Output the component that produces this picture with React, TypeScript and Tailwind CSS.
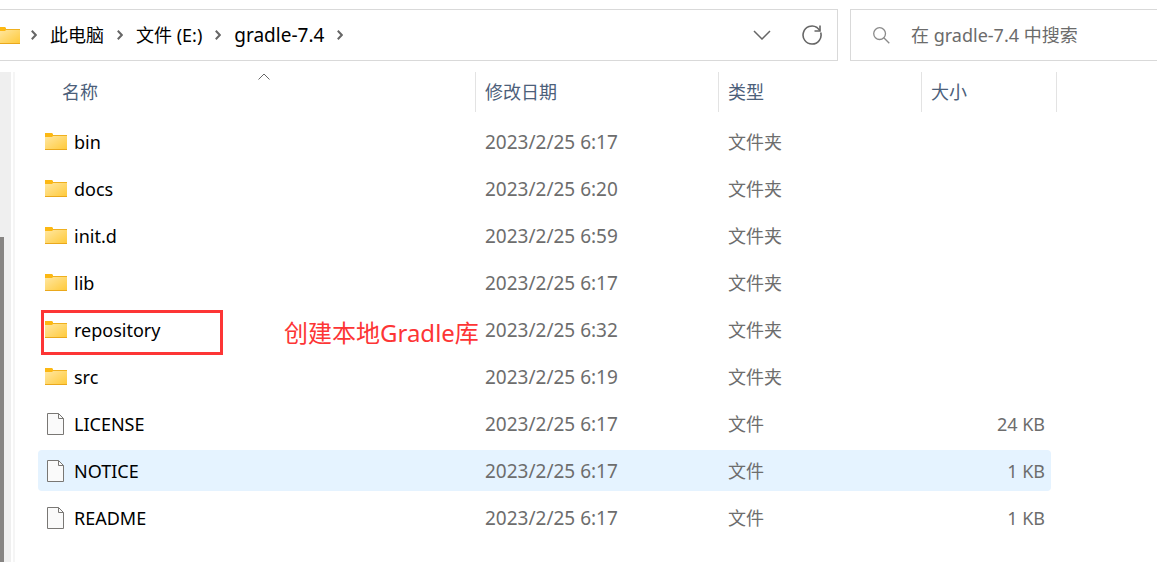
type Entry = {
  name: string;
  modified: string;
  kind: "folder" | "file";
  size?: string;
  hovered?: boolean;
  note?: string;
};

const entries: Entry[] = [
  { name: "bin", modified: "2023/2/25 6:17", kind: "folder" },
  { name: "docs", modified: "2023/2/25 6:20", kind: "folder" },
  { name: "init.d", modified: "2023/2/25 6:59", kind: "folder" },
  { name: "lib", modified: "2023/2/25 6:17", kind: "folder" },
  { name: "repository", modified: "2023/2/25 6:32", kind: "folder", note: "创建本地Gradle库" },
  { name: "src", modified: "2023/2/25 6:19", kind: "folder" },
  { name: "LICENSE", modified: "2023/2/25 6:17", kind: "file", size: "24 KB" },
  { name: "NOTICE", modified: "2023/2/25 6:17", kind: "file", size: "1 KB", hovered: true },
  { name: "README", modified: "2023/2/25 6:17", kind: "file", size: "1 KB" },
];

function FolderIcon() {
  return (
    <svg width="22" height="17" viewBox="0 0 22 17" className="shrink-0" aria-hidden="true">
      <defs>
        <linearGradient id="folder" x1="0" y1="0" x2="1" y2="1">
          <stop offset="0" stopColor="#ffe7a2" />
          <stop offset="1" stopColor="#ffc937" />
        </linearGradient>
      </defs>
      <path d="M0 3H22V17H0Z" fill="url(#folder)" />
      <path d="M7 2H22V3H7Z" fill="#efb01f" />
      <path d="M0 0H7L8 1V3L7 4H0Z" fill="#fcb813" />
      <path d="M0 16H22V17H0Z" fill="#eaa81c" />
    </svg>
  );
}

function FileIcon() {
  return (
    <svg width="17" height="22" viewBox="0 0 17 22" fill="none" className="ml-[2px] mr-[3px] shrink-0" aria-hidden="true">
      <path d="M.5 .5H11.5L16.5 5.5V21.5H.5Z" fill="#fafafa" stroke="#797774" />
      <path d="M11.5 .5V5.5H16.5" stroke="#797774" />
    </svg>
  );
}

function Crumb() {
  return (
    <svg width="6" height="10" viewBox="0 0 6 10" fill="none" stroke="#666" strokeWidth="2" className="shrink-0" aria-hidden="true">
      <path d="M.8 .8L4.8 5L.8 9.2" />
    </svg>
  );
}

function HeaderCell({ label }: { label: string }) {
  return (
    <th scope="col" className="h-[43px] p-0 text-left align-top font-normal">
      <div className="flex h-10 items-center border-l border-[#e3e3e3] pl-[9px]">{label}</div>
    </th>
  );
}

export default function App() {
  return (
    <div className="flex min-h-screen flex-col overflow-hidden bg-white font-['Noto_Sans','Noto_Sans_CJK_SC',sans-serif] text-[18px] leading-6 text-black">
      <header className="flex gap-3 pt-[9px]">
        <div className="flex h-[52px] w-[838px] shrink-0 items-center border border-l-0 border-[#d9d9d9]">
          <nav aria-label="路径" className="flex flex-1 items-center">
            <span className="flex w-5 justify-end overflow-hidden">
              <FolderIcon />
            </span>
            <ol className="flex items-center gap-[13px] pl-[11px] whitespace-nowrap">
              <li className="flex items-center gap-[13px]"><Crumb /><a href="#pc">此电脑</a></li>
              <li className="flex items-center gap-[13px]"><Crumb /><a href="#e">文件 (E:)</a></li>
              <li className="flex items-center gap-[13px]"><Crumb /><a href="#gradle" className="text-[19px]">gradle-7.4</a></li>
              <li><Crumb /></li>
            </ol>
          </nav>
          <button type="button" aria-label="以前的位置" className="mr-[31px] flex">
            <svg width="18" height="10" viewBox="0 0 18 10" fill="none" stroke="#666" strokeWidth="1.5">
              <path d="M1 1L9 9L17 1" />
            </svg>
          </button>
          <button type="button" aria-label="刷新" className="mr-[15px] flex">
            <svg width="20" height="20" viewBox="0 0 20 20" fill="none" stroke="#666" strokeWidth="1.6">
              <path d="M18.7 7.5A9 9 0 1 1 15 2.5L18 5.5" />
              <path d="M18 .5V6H12.5" />
            </svg>
          </button>
        </div>
        <label className="flex h-[52px] min-w-0 flex-1 items-center gap-[21px] border border-r-0 border-[#d9d9d9] pl-[22px]">
          <svg width="17" height="17" viewBox="0 0 17 17" fill="none" stroke="#8a8a8a" strokeWidth="1.3" className="shrink-0" aria-hidden="true">
            <circle cx="6.6" cy="6.6" r="5.9" />
            <path d="M10.8 10.8L16.3 16.3" />
          </svg>
          <input
            type="search"
            aria-label="搜索"
            placeholder="在 gradle-7.4 中搜索"
            className="min-w-0 flex-1 bg-transparent outline-none placeholder:text-[#6b6b6b]"
          />
        </label>
      </header>

      <div className="flex flex-1">
        <div className="mt-[11px] flex w-[15px] shrink-0 border-r-2 border-[#f5f5f5]">
          <div className="w-[11px] bg-[#efefef] pt-[165px]">
            <div className="h-full w-1 bg-[#868482]" />
          </div>
        </div>
        <main className="min-w-0 flex-1 pt-[5px] pl-[23px]">
          <table className="w-full table-fixed border-separate border-spacing-x-0 border-spacing-y-[6px]">
            <colgroup>
              <col className="w-[437px]" />
              <col className="w-[243px]" />
              <col className="w-[203px]" />
              <col className="w-[130px]" />
              <col />
            </colgroup>
            <thead className="text-[#4c607a]">
              <tr>
                <th scope="col" aria-sort="ascending" className="relative h-[43px] p-0 text-left align-top font-normal">
                  <div className="flex h-10 items-center pl-6">名称</div>
                  <svg width="12" height="7" viewBox="0 0 12 7" fill="none" stroke="#666" className="absolute top-px left-[220px]" aria-hidden="true">
                    <path d="M.5 6.5L6 1L11.5 6.5" />
                  </svg>
                </th>
                <HeaderCell label="修改日期" />
                <HeaderCell label="类型" />
                <HeaderCell label="大小" />
                <td className="p-0 pl-[5px] align-top">
                  <div className="h-10 border-l border-[#e3e3e3]" />
                </td>
              </tr>
            </thead>
            <tbody className="text-[#6d6d6d]">
              {entries.map((e) => {
                const bg = e.hovered ? "bg-[#e5f3ff]" : "";
                return (
                  <tr key={e.name}>
                    <td className={`relative h-[41px] rounded-l-sm p-0 ${bg}`}>
                      <div className="flex items-center gap-[7px] pl-[7px] text-black">
                        {e.kind === "folder" ? <FolderIcon /> : <FileIcon />}
                        {e.name}
                      </div>
                      {e.note && (
                        <>
                          <div className="absolute top-px left-[3px] h-[45px] w-[182px] border-3 border-[#fd3535]" />
                          <div className="absolute top-1 left-[246px] text-[24px] leading-10 whitespace-nowrap text-[#fd3535]">
                            {e.note}
                          </div>
                        </>
                      )}
                    </td>
                    <td className={`p-0 pl-[10px] text-[19px] ${bg}`}>{e.modified}</td>
                    <td className={`p-0 pl-[10px] ${bg}`}>{e.kind === "folder" ? "文件夹" : "文件"}</td>
                    <td className={`rounded-r-sm p-0 pr-[6px] text-right ${bg}`}>{e.size}</td>
                  </tr>
                );
              })}
            </tbody>
          </table>
        </main>
      </div>
    </div>
  );
}
